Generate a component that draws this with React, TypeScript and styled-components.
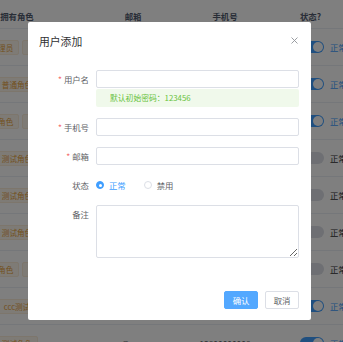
import styled, { createGlobalStyle } from "styled-components";

const GlobalStyle = createGlobalStyle`
  html, body {
    margin: 0;
    padding: 0;
    background: #fff;
  }
  body {
    font-family: "Noto Sans CJK SC", "Noto Sans", "Liberation Sans", sans-serif;
  }
`;

const Page = styled.div`
  position: relative;
  width: 343px;
  height: 342px;
  overflow: hidden;
  background: #fff;
`;

const Table = styled.div`
  margin-left: -45px;
  width: 420px;
  font-size: 8.4px;
  color: #606266;
`;

const Row = styled.div<{ $head?: boolean }>`
  display: grid;
  grid-template-columns: 124px 108px 76px 1fr;
  align-items: center;
  height: ${(p) => (p.$head ? "29px" : "37px")};
  padding-top: ${(p) => (p.$head ? "3px" : "0")};
  box-sizing: border-box;
  border-bottom: 1px solid #ebeef5;
  font-weight: ${(p) => (p.$head ? 700 : 400)};
  color: ${(p) => (p.$head ? "#515a6e" : "#606266")};
`;

const Cell = styled.div<{ $left?: boolean }>`
  display: flex;
  justify-content: ${(p) => (p.$left ? "flex-start" : "center")};
  align-items: center;
  gap: 3px;
  padding-left: ${(p) => (p.$left ? "37px" : "0")};
  white-space: nowrap;
`;

const Tag = styled.span`
  display: inline-flex;
  align-items: center;
  height: 13px;
  padding: 0 5px;
  font-size: 7.6px;
  color: #e6a23c;
  background: #fdf6ec;
  border: 1px solid #faecd8;
  border-radius: 2px;
`;

const Switch = styled.span<{ $on: boolean }>`
  position: relative;
  display: inline-block;
  width: 24px;
  height: 12px;
  border-radius: 6px;
  background: ${(p) => (p.$on ? "#409eff" : "#dcdfe6")};
  margin-right: 3px;
  &::after {
    content: "";
    position: absolute;
    top: 1px;
    left: ${(p) => (p.$on ? "13px" : "1px")};
    width: 10px;
    height: 10px;
    border-radius: 50%;
    background: #fff;
  }
`;

const SwitchText = styled.span<{ $on: boolean }>`
  color: ${(p) => (p.$on ? "#409eff" : "#303133")};
`;

const Overlay = styled.div`
  position: absolute;
  inset: 0;
  background: rgba(0, 0, 0, 0.5);
`;

const Dialog = styled.div`
  position: absolute;
  left: 28px;
  top: 22px;
  width: 283px;
  height: 298px;
  box-sizing: border-box;
  background: #fff;
  border-radius: 2px;
  display: flex;
  flex-direction: column;
`;

const Header = styled.div`
  display: flex;
  justify-content: space-between;
  align-items: center;
  padding: 12px 12px 0 11px;
  height: 15px;
`;

const Title = styled.span`
  font-size: 10.8px;
  line-height: 15px;
  color: #303133;
`;

const Close = styled.svg`
  width: 7px;
  height: 7px;
  margin-top: -3px;
  margin-right: 1px;
`;

const Body = styled.div`
  padding: 21px 12px 0 18px;
`;

const Item = styled.div`
  display: flex;
  align-items: flex-start;
  margin-bottom: 11px;
  &:last-child {
    margin-bottom: 0;
  }
`;

const Label = styled.div`
  width: 50px;
  flex-shrink: 0;
  box-sizing: border-box;
  padding-right: 7px;
  text-align: right;
  font-size: 8.4px;
  line-height: 18px;
  color: #606266;
  white-space: nowrap;
`;

const Star = styled.span`
  color: #f56c6c;
  margin-right: 2px;
`;

const Field = styled.div`
  flex: 1;
  display: flex;
  flex-direction: column;
`;

const Input = styled.input`
  height: 18px;
  box-sizing: border-box;
  border: 1px solid #dcdfe6;
  border-radius: 2px;
  padding: 0 9px;
  font-size: 8.4px;
  outline: none;
`;

const TextArea = styled.textarea`
  height: 53px;
  box-sizing: border-box;
  border: 1px solid #dcdfe6;
  border-radius: 2px;
  padding: 3px 9px;
  font-size: 8.4px;
  outline: none;
  resize: vertical;
  font-family: inherit;
`;

const Hint = styled.div`
  margin-top: 1px;
  height: 18px;
  background: #f0f9eb;
  color: #67c23a;
  font-size: 7.8px;
  line-height: 18px;
  padding-left: 14px;
  border-radius: 2px;
`;

const Radios = styled.div`
  display: flex;
  align-items: center;
  height: 18px;
  gap: 18px;
`;

const Radio = styled.label<{ $checked?: boolean }>`
  display: flex;
  align-items: center;
  gap: 5px;
  font-size: 8.4px;
  color: ${(p) => (p.$checked ? "#409eff" : "#606266")};
`;

const Dot = styled.span<{ $checked?: boolean }>`
  position: relative;
  width: 8px;
  height: 8px;
  box-sizing: border-box;
  border-radius: 50%;
  border: 1px solid ${(p) => (p.$checked ? "#409eff" : "#dcdfe6")};
  background: ${(p) => (p.$checked ? "#409eff" : "#fff")};
  &::after {
    content: "";
    display: ${(p) => (p.$checked ? "block" : "none")};
    position: absolute;
    left: 1.5px;
    top: 1.5px;
    width: 3px;
    height: 3px;
    border-radius: 50%;
    background: #fff;
  }
`;

const Footer = styled.div`
  display: flex;
  justify-content: flex-end;
  gap: 7px;
  margin-top: auto;
  padding: 0 12px 11px 0;
`;

const Button = styled.button<{ $primary?: boolean }>`
  width: 34px;
  height: 18px;
  padding: 0;
  font-size: 8.4px;
  font-family: inherit;
  border-radius: 2px;
  border: 1px solid ${(p) => (p.$primary ? "#53a8ff" : "#dcdfe6")};
  background: ${(p) => (p.$primary ? "#53a8ff" : "#fff")};
  color: ${(p) => (p.$primary ? "#fff" : "#606266")};
`;

const rows = [
  { tags: ["超级管理员", "普通角色"], email: "admin@qq.com", phone: "13800000000", on: true },
  { tags: ["普通角色"], email: "user@qq.com", phone: "13800000001", on: true },
  { tags: ["普通角色", "管理员"], email: "test@qq.com", phone: "13800000002", on: true },
  { tags: ["测试角色"], email: "aaa@qq.com", phone: "13800000003", on: false },
  { tags: ["测试角色"], email: "bbb@qq.com", phone: "13800000004", on: false },
  { tags: ["测试角色"], email: "ccc@qq.com", phone: "13800000005", on: false },
  { tags: ["普通角色", "测试员"], email: "ddd@qq.com", phone: "13800000006", on: false },
  { tags: ["ccc测试"], email: "ccc@qq.com", phone: "13800000007", on: true },
  { tags: ["测试角色"], email: "eee@qq.com", phone: "13800000008", on: true },
];

export default function App() {
  return (
    <Page>
      <GlobalStyle />
      <Table>
        <Row $head>
          <Cell>拥有角色</Cell>
          <Cell>邮箱</Cell>
          <Cell>手机号</Cell>
          <Cell $left>状态?</Cell>
        </Row>
        {rows.map((r, i) => (
          <Row key={i}>
            <Cell>
              {r.tags.map((t) => (
                <Tag key={t}>{t}</Tag>
              ))}
            </Cell>
            <Cell>{r.email}</Cell>
            <Cell>{r.phone}</Cell>
            <Cell $left>
              <Switch $on={r.on} />
              <SwitchText $on={r.on}>正常</SwitchText>
            </Cell>
          </Row>
        ))}
      </Table>
      <Overlay />
      <Dialog>
        <Header>
          <Title>用户添加</Title>
          <Close viewBox="0 0 7 7">
            <path d="M0.5 0.5 L6.5 6.5 M6.5 0.5 L0.5 6.5" stroke="#909399" strokeWidth="0.9" fill="none" />
          </Close>
        </Header>
        <Body>
          <Item>
            <Label>
              <Star>*</Star>用户名
            </Label>
            <Field>
              <Input />
              <Hint>默认初始密码：123456</Hint>
            </Field>
          </Item>
          <Item>
            <Label>
              <Star>*</Star>手机号
            </Label>
            <Field>
              <Input />
            </Field>
          </Item>
          <Item>
            <Label>
              <Star>*</Star>邮箱
            </Label>
            <Field>
              <Input />
            </Field>
          </Item>
          <Item>
            <Label>状态</Label>
            <Radios>
              <Radio $checked>
                <Dot $checked />
                正常
              </Radio>
              <Radio>
                <Dot />
                禁用
              </Radio>
            </Radios>
          </Item>
          <Item>
            <Label>备注</Label>
            <Field>
              <TextArea />
            </Field>
          </Item>
        </Body>
        <Footer>
          <Button $primary>确认</Button>
          <Button>取消</Button>
        </Footer>
      </Dialog>
    </Page>
  );
}
